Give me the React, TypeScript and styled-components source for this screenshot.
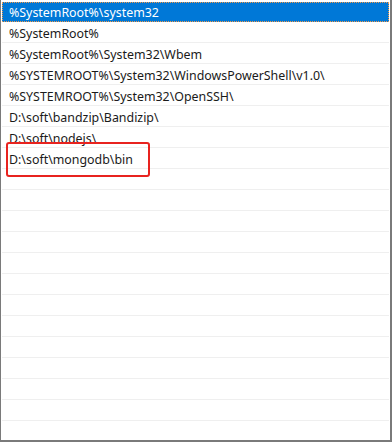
import React, { FC } from "react";
import styled, { createGlobalStyle } from "styled-components";

const paths = [
  "%SystemRoot%\\system32",
  "%SystemRoot%",
  "%SystemRoot%\\System32\\Wbem",
  "%SYSTEMROOT%\\System32\\WindowsPowerShell\\v1.0\\",
  "%SYSTEMROOT%\\System32\\OpenSSH\\",
  "D:\\soft\\bandzip\\Bandizip\\",
  "D:\\soft\\nodejs\\",
  "D:\\soft\\mongodb\\bin",
];

const TOTAL_ROWS = 22;
const SELECTED = 0;
const MARKED = 7;

const App: FC = () => {
  const rows = Array.from({ length: TOTAL_ROWS }, (_, i) => paths[i] ?? "");
  return (
    <>
      <GlobalStyle />
      <Root>
        <List>
          {rows.map((text, i) => (
            <Row key={i} selected={i === SELECTED}>
              <Cell selected={i === SELECTED}>{text}</Cell>
              {i === MARKED && <Mark />}
            </Row>
          ))}
        </List>
      </Root>
    </>
  );
};

export default App;

const GlobalStyle = createGlobalStyle`
  html, body {
    margin: 0;
    padding: 0;
    background: #ffffff;
  }
`;

const Root = styled.div`
  width: 392px;
  height: 442px;
  box-sizing: border-box;
  border-left: 1px solid #7a7a7a;
  border-right: 2px solid #7a7a7a;
  border-bottom: 2px solid #7a7a7a;
  overflow: hidden;
  background: #ffffff;
  font-family: "Noto Sans", "Noto Sans CJK SC", sans-serif;
  font-size: 12.4px;
`;

const List = styled.div`
  display: flex;
  flex-direction: column;
  padding: 1px 0 0 1px;
`;

const Row = styled.div<{ selected: boolean }>`
  position: relative;
  height: 21px;
  flex-shrink: 0;
  box-sizing: border-box;
  border-bottom: 1px solid ${({ selected }) => (selected ? "transparent" : "#efefef")};
  margin-right: 1px;
`;

const Cell = styled.div<{ selected: boolean }>`
  height: 100%;
  box-sizing: border-box;
  display: flex;
  align-items: center;
  padding-left: 6px;
  white-space: nowrap;
  color: ${({ selected }) => (selected ? "#ffffff" : "#1a1a1a")};
  background: ${({ selected }) => (selected ? "#0078d7" : "transparent")};
  border: 1px dotted ${({ selected }) => (selected ? "#f29a4a" : "transparent")};
  margin-top: 1px;
`;

const Mark = styled.div`
  position: absolute;
  left: 4px;
  top: -6px;
  width: 144px;
  height: 35px;
  box-sizing: border-box;
  border: 2px solid #e8231f;
  border-radius: 3px;
  pointer-events: none;
`;
